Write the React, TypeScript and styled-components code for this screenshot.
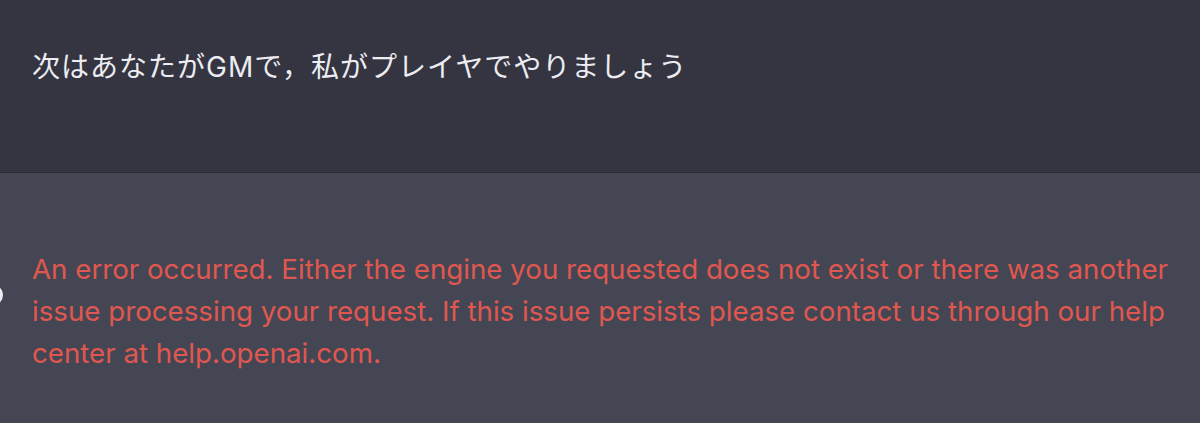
import React from "react";
import styled, { createGlobalStyle } from "styled-components";

const GlobalStyle = createGlobalStyle`
  html, body {
    margin: 0;
    padding: 0;
    background: #444654;
  }
  body {
    font-family: Inter, "Noto Sans CJK JP", sans-serif;
    overflow: hidden;
  }
`;

const App = () => {
  return (
    <>
      <GlobalStyle />
      <Thread>
        <Message variant="user">
          <Text>次はあなたがGMで，私がプレイヤでやりましょう</Text>
        </Message>
        <Message variant="bot">
          <Avatar />
          <ErrorText>
            An error occurred. Either the engine you requested does not exist or there was another
            issue processing your request. If this issue persists please contact us through our help
            center at help.openai.com.
          </ErrorText>
        </Message>
      </Thread>
    </>
  );
};

export default App;

const Thread = styled.main`
  display: flex;
  flex-direction: column;
  width: 1200px;
  height: 423px;
`;

const Message = styled.div<{ variant: "user" | "bot" }>`
  display: flex;
  align-items: flex-start;
  padding: ${(p) => (p.variant === "user" ? "46px 32px 0" : "75px 32px 0")};
  height: ${(p) => (p.variant === "user" ? "173px" : "auto")};
  flex: ${(p) => (p.variant === "user" ? "none" : "1")};
  box-sizing: border-box;
  background-color: ${(p) => (p.variant === "user" ? "#343541" : "#444654")};
  border-bottom: ${(p) => (p.variant === "user" ? "1px solid #2a2b33" : "none")};
`;

const Avatar = styled.div`
  flex: none;
  width: 22px;
  height: 22px;
  margin-left: -51px;
  margin-right: 29px;
  margin-top: 36px;
  border-radius: 50%;
  background: #ececf1;
`;

const Text = styled.p`
  margin: 0;
  font-size: 28px;
  line-height: 42px;
  letter-spacing: 1px;
  color: #ececf1;
`;

const ErrorText = styled.p`
  margin: 0;
  width: 1150px;
  font-size: 27.7px;
  line-height: 42px;
  color: #e0574f;
`;
